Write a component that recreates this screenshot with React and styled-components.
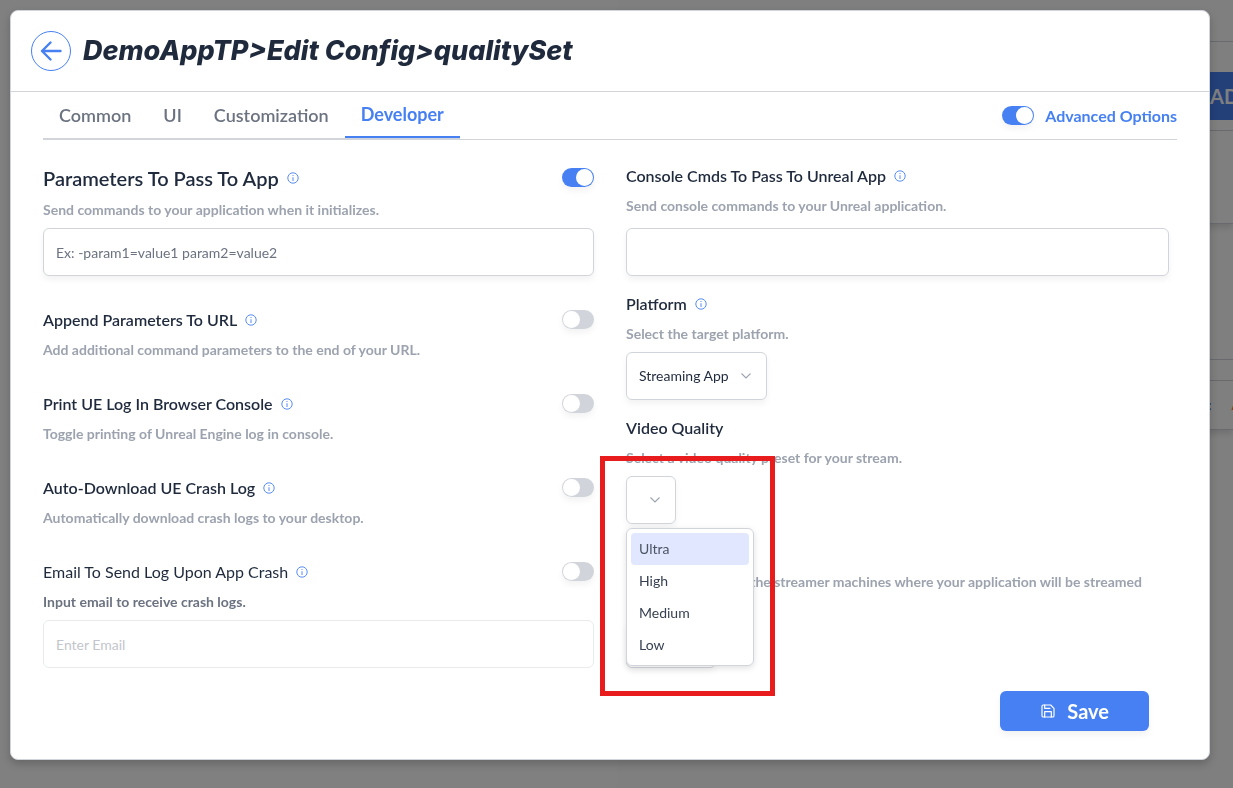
import { useId, useState } from "react";
import styled, { createGlobalStyle } from "styled-components";
import { FiSave } from "react-icons/fi";

const GlobalStyle = createGlobalStyle`
  :root {
    --blue: #4680f2;
    --dark: #1f2a3d;
    --grey: #6b7280;
    --lightGrey: #9ca3af;
    --line: #d1d5db;
    --softShadow: 0 4px 6px rgba(0, 0, 0, 0.05);
  }

  *, *::before, *::after {
    box-sizing: border-box;
  }

  body {
    margin: 0;
    color: var(--dark);
    background: #808080;
    font-family: Lato, "Liberation Sans", sans-serif;
    font-size: 14px;
    line-height: 20px;
  }

  button, input, select {
    font: inherit;
    color: inherit;
  }

  h1, p, ul {
    margin: 0;
    padding: 0;
  }
`;

// dashboard that sits under the overlay
const Dashboard = styled.div`
  position: fixed;
  inset: 0 0 0 50%;
  overflow: hidden;
  background: #fff;

  &::after {
    content: "";
    position: absolute;
    inset: 0;
    background: rgba(0, 0, 0, 0.5);
  }
`;

const TopBar = styled.div`
  height: 42px;
  border-bottom: 1px solid var(--line);
`;

const Toolbar = styled.div`
  display: flex;
  height: 89px;
  padding: 30px 0 10px calc(100% - 43px);
  border-bottom: 1px solid var(--line);
`;

const AddButton = styled.button`
  flex: none;
  padding: 0 20px;
  border: 0;
  border-radius: 6px;
  background: var(--blue);
  color: #fff;
  font-size: 20px;
  font-weight: 700;
`;

const Card = styled.div`
  display: flex;
  align-items: center;
  gap: 20px;
  height: ${(p) => p.$height}px;
  padding-left: calc(100% - 25px);
  border-bottom: 1px solid var(--line);
  box-shadow: ${(p) => (p.$shadow ? "0 4px 6px rgba(0, 0, 0, 0.12)" : "none")};

  a {
    color: #f97316;
    text-decoration: none;
  }
`;

const Modal = styled.main`
  position: relative;
  margin: 10px 23px 28px 10px;
  border: 1px solid var(--line);
  border-radius: 8px;
  background: #fff;
  box-shadow: 0 4px 8px rgba(0, 0, 0, 0.2);
`;

const Header = styled.header`
  display: flex;
  align-items: center;
  gap: 12px;
  padding: 20px;
  border-bottom: 1px solid var(--line);

  h1 {
    font-family: Inter, "Liberation Sans", sans-serif;
    font-size: 27px;
    font-weight: 800;
    font-style: italic;
    line-height: 40px;
  }
`;

const BackButton = styled.button`
  display: flex;
  align-items: center;
  justify-content: center;
  width: 40px;
  height: 40px;
  padding: 0;
  border: 1px solid var(--blue);
  border-radius: 50%;
  background: none;
  color: var(--blue);
`;

const Nav = styled.nav`
  display: flex;
  align-items: center;
  justify-content: space-between;
  margin: 0 32px;
  box-shadow: inset 0 -1px 0 var(--line);
`;

const Tabs = styled.div`
  display: flex;
  height: 48px;
  border-bottom: 2px solid var(--line);
`;

const Tab = styled.button`
  padding: 0 16px;
  border: 0;
  border-bottom: ${(p) => (p.$active ? "2px solid var(--blue)" : "0")};
  background: none;
  color: ${(p) => (p.$active ? "var(--blue)" : "var(--grey)")};
  font-size: 18px;
  font-weight: ${(p) => (p.$active ? 700 : 600)};
`;

const AdvancedLabel = styled.label`
  display: flex;
  align-items: center;
  gap: 11px;
  color: var(--blue);
  font-size: 16px;
  font-weight: 700;
`;

const Toggle = styled.input`
  appearance: none;
  flex: none;
  display: flex;
  width: 32px;
  height: 19px;
  margin: 0 0 1px;
  padding: 1px;
  border-radius: 10px;
  background: var(--line);
  box-shadow: var(--softShadow);

  &::before {
    content: "";
    width: 17px;
    height: 17px;
    border-radius: 50%;
    background: #fff;
  }

  &:checked {
    justify-content: flex-end;
    background: var(--blue);
  }
`;

const Columns = styled.div`
  display: grid;
  grid-template-columns: 1fr 1fr;
  gap: 32px;
  padding: 24px 32px 0;
`;

const Column = styled.section`
  display: flex;
  flex-direction: column;
  gap: ${(p) => p.$gap}px;
  padding-right: ${(p) => p.$inset || 0}px;
`;

const FieldBox = styled.div`
  display: flex;
  flex-direction: column;
  align-items: flex-start;
  gap: 8px;
`;

const FieldTop = styled.div`
  display: flex;
  align-items: center;
  gap: 8px;
  width: 100%;

  ${Toggle} {
    margin-left: auto;
  }
`;

const FieldTitle = styled.label`
  font-size: ${(p) => (p.$large ? 20 : 16)}px;
  line-height: ${(p) => (p.$large ? 28 : 24)}px;
  font-weight: ${(p) => (p.$light ? 400 : 600)};
`;

const Hint = styled.p`
  color: ${(p) => (p.$dark ? "var(--grey)" : "var(--lightGrey)")};
  font-weight: 700;
`;

const TextInput = styled.input`
  width: 100%;
  height: 48px;
  margin-top: ${(p) => p.$space || 0}px;
  padding: 0 12px;
  border: 1px solid var(--line);
  border-radius: 6px;
  background: #fff;
  box-shadow: var(--softShadow);

  &::placeholder {
    color: var(--grey);
  }

  &:disabled {
    opacity: 0.5;
    box-shadow: none;
  }

  &:disabled::placeholder {
    color: #858b98;
  }
`;

const SelectBox = styled.div`
  position: relative;
  display: grid;
  align-items: center;

  > select,
  > svg {
    grid-area: 1 / 1;
  }

  > select {
    appearance: none;
    height: 48px;
    padding: 0 36px 0 12px;
    border: 1px solid var(--line);
    border-radius: 6px;
    background: #fff;
    box-shadow: var(--softShadow);
  }

  > svg {
    justify-self: end;
    margin-right: 16px;
    color: var(--lightGrey);
    pointer-events: none;
  }
`;

const Menu = styled.ul`
  position: absolute;
  z-index: 1;
  top: 52px;
  left: 0;
  width: 128px;
  padding: 4px;
  list-style: none;
  border: 1px solid var(--line);
  border-radius: 6px;
  background: #fff;
  box-shadow: 0 2px 6px rgba(0, 0, 0, 0.12);
`;

const MenuItem = styled.li`
  padding: 6px 8px;
  border-radius: 4px;
  background: ${(p) => (p.$active ? "#e0e7ff" : "none")};
  color: ${(p) => (p.$active ? "#4b5563" : "#374151")};
`;

const Highlight = styled.div`
  position: absolute;
  z-index: 2;
  top: -20px;
  left: -26px;
  width: 175px;
  height: 240px;
  border: 5px solid #e81c1c;
  pointer-events: none;
`;

const Footer = styled.footer`
  display: flex;
  justify-content: flex-end;
  padding: 23px 60px 28px;
`;

const SaveButton = styled.button`
  display: flex;
  align-items: center;
  gap: 11px;
  height: 40px;
  padding: 0 40px;
  border: 0;
  border-radius: 6px;
  background: var(--blue);
  color: #fff;
  font-size: 20px;
  font-weight: 700;
  box-shadow: var(--softShadow);
`;

const ArrowIcon = () => (
  <svg width="24" height="24" viewBox="0 0 24 24" fill="none" stroke="currentColor" strokeWidth="2.4" strokeLinecap="round" strokeLinejoin="round" aria-hidden="true">
    <path d="M21.5 12H3M11.5 3.5L3 12L11.5 20.5" />
  </svg>
);

const InfoIcon = () => (
  <svg width="12" height="12" viewBox="0 0 12 12" fill="none" stroke="var(--blue)" aria-hidden="true">
    <circle cx="6" cy="6" r="5.2" strokeWidth="0.9" />
    <path d="M6 5.2V9M6 3V4" strokeWidth="0.9" />
  </svg>
);

const ChevronIcon = () => (
  <svg width="10" height="8" viewBox="0 0 10 8" fill="none" stroke="currentColor" strokeWidth="1.1" aria-hidden="true">
    <path d="M0.5 1.5L5 6L9.5 1.5" />
  </svg>
);

function Field({ title, hint, large, light, darkHint, noInfo, toggle, on, children }) {
  const id = useId();
  return (
    <FieldBox>
      <FieldTop>
        <FieldTitle htmlFor={id} $large={large} $light={light}>
          {title}
        </FieldTitle>
        {!noInfo && <InfoIcon />}
        {toggle && (
          <Toggle
            type="checkbox"
            role="switch"
            id={children ? undefined : id}
            aria-label={title}
            defaultChecked={on}
          />
        )}
      </FieldTop>
      <Hint $dark={darkHint}>{hint}</Hint>
      {children && children(id)}
    </FieldBox>
  );
}

const tabs = ["Common", "UI", "Customization", "Developer"];
const qualities = ["Ultra", "High", "Medium", "Low"];

export default function App() {
  const [tab, setTab] = useState("Developer");
  const [active, setActive] = useState("Ultra");

  return (
    <>
      <GlobalStyle />
      <Dashboard aria-hidden="true">
        <TopBar />
        <Toolbar>
          <AddButton tabIndex={-1}>ADD</AddButton>
        </Toolbar>
        <Card $height={93} $shadow />
        <Card $height={136} />
        <Card $height={21} />
        <Card $height={49} $shadow>
          <span>:</span>
          <a href="#app" tabIndex={-1}>A</a>
        </Card>
      </Dashboard>

      <Modal>
        <Header>
          <BackButton aria-label="Back">
            <ArrowIcon />
          </BackButton>
          <h1>DemoAppTP&gt;Edit Config&gt;qualitySet</h1>
        </Header>

        <Nav>
          <Tabs>
            {tabs.map((name) => (
              <Tab key={name} $active={name === tab} onClick={() => setTab(name)}>
                {name}
              </Tab>
            ))}
          </Tabs>
          <AdvancedLabel>
            <Toggle type="checkbox" role="switch" defaultChecked />
            Advanced Options
          </AdvancedLabel>
        </Nav>

        <Columns>
          <Column $gap={32}>
            <Field
              title="Parameters To Pass To App"
              hint="Send commands to your application when it initializes."
              large
              toggle
              on
            >
              {(id) => <TextInput id={id} placeholder="Ex: -param1=value1 param2=value2" />}
            </Field>
            <Field
              title="Append Parameters To URL"
              hint="Add additional command parameters to the end of your URL."
              toggle
            />
            <Field
              title="Print UE Log In Browser Console"
              hint="Toggle printing of Unreal Engine log in console."
              toggle
            />
            <Field
              title="Auto-Download UE Crash Log"
              hint="Automatically download crash logs to your desktop."
              toggle
            />
            <Field
              title="Email To Send Log Upon App Crash"
              hint="Input email to receive crash logs."
              light
              darkHint
              toggle
            >
              {(id) => <TextInput id={id} type="email" placeholder="Enter Email" disabled />}
            </Field>
          </Column>

          <Column $gap={16} $inset={8}>
            <Field
              title="Console Cmds To Pass To Unreal App"
              hint="Send console commands to your Unreal application."
            >
              {(id) => <TextInput id={id} $space={4} />}
            </Field>
            <Field title="Platform" hint="Select the target platform.">
              {(id) => (
                <SelectBox>
                  <select id={id}>
                    <option>Streaming App</option>
                  </select>
                  <ChevronIcon />
                </SelectBox>
              )}
            </Field>
            <Field title="Video Quality" hint="Select a video quality preset for your stream." noInfo>
              {(id) => (
                <SelectBox>
                  <select id={id}>
                    <option value="" aria-label="No preset" />
                  </select>
                  <ChevronIcon />
                  <Menu role="listbox" aria-label="Video Quality">
                    {qualities.map((name) => (
                      <MenuItem
                        key={name}
                        role="option"
                        aria-selected={name === active}
                        $active={name === active}
                        onMouseEnter={() => setActive(name)}
                      >
                        {name}
                      </MenuItem>
                    ))}
                  </Menu>
                  <Highlight />
                </SelectBox>
              )}
            </Field>
            <Field
              title="Region"
              hint="Select the region of the streamer machines where your application will be streamed from."
              noInfo
            >
              {(id) => (
                <SelectBox>
                  <select id={id}>
                    <option>Global</option>
                  </select>
                  <ChevronIcon />
                </SelectBox>
              )}
            </Field>
          </Column>
        </Columns>

        <Footer>
          <SaveButton>
            <FiSave size={16} strokeWidth={1.8} aria-hidden="true" />
            Save
          </SaveButton>
        </Footer>
      </Modal>
    </>
  );
}
